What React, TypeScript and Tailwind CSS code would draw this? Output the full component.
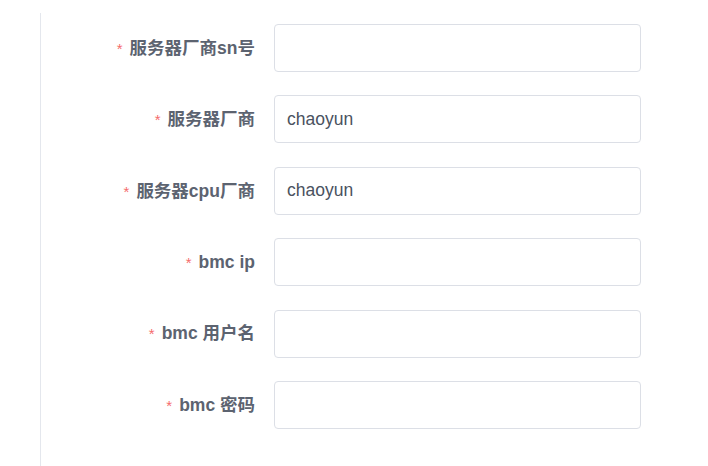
const fields = [
  { label: '服务器厂商sn号', value: '' },
  { label: '服务器厂商', value: 'chaoyun' },
  { label: '服务器cpu厂商', value: 'chaoyun' },
  { label: 'bmc ip', value: '' },
  { label: 'bmc 用户名', value: '' },
  { label: 'bmc 密码', value: '' },
]

export default function App() {
  return (
    <div
      className="h-[466px] w-full overflow-hidden bg-white"
      style={{ fontFamily: '"Liberation Sans", "Noto Sans CJK SC", sans-serif' }}
    >
      <div className="ml-[40px] mt-[13px] h-[453px] border-l border-[#e4e7ed] pt-[11px]">
        {fields.map((f) => (
          <div key={f.label} className="mb-[23.4px] flex h-[48px] items-center">
            <label className="w-[214px] text-right text-[17.5px] font-bold text-[#5c6370]">
              <span className="mr-[7px] text-[15px] font-normal text-[#f56c6c]">*</span>
              {f.label}
            </label>
            <input
              defaultValue={f.value}
              className="ml-[19px] h-[48px] w-[367px] rounded-[4px] border border-[#dcdfe6] bg-white px-3 text-[17.5px] text-[#4a5260] outline-none"
            />
          </div>
        ))}
      </div>
    </div>
  )
}
